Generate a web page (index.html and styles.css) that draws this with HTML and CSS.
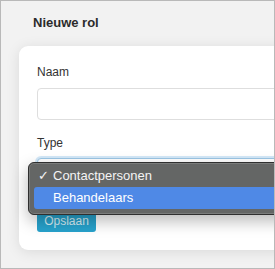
FILE: index.html
```html
<!DOCTYPE html>
<html lang="nl">
<head>
<meta charset="utf-8">
<title>Nieuwe rol</title>
<link rel="stylesheet" href="styles.css">
</head>
<body>
<div class="frame">
	<h1 class="title">Nieuwe rol</h1>
	<div class="card">
		<div class="field">
			<label class="lbl">Naam</label>
			<div class="input"></div>
		</div>
		<div class="field">
			<label class="lbl">Type</label>
			<div class="select-wrap">
				<div class="select"></div>
				<ul class="menu">
					<li class="opt"><span class="check">&#10003;</span>Contactpersonen</li>
					<li class="opt hl">Behandelaars</li>
				</ul>
			</div>
		</div>
		<button class="btn">Opslaan</button>
	</div>
</div>
</body>
</html>
```
FILE: styles.css
```css
html, body {margin:0; padding:0;}
body {font-family:"Liberation Sans", Arial, sans-serif; color:#333; background:#f2f2f2; overflow:hidden;}
.frame {box-sizing:border-box; width:275px; height:269px; border:1px solid #b9b9b9; background:#f2f2f2; overflow:hidden; padding:14px 0 0 0;}
.title {margin:0 0 15px 32px; font-size:13px; line-height:16px; font-weight:bold; color:#2b2b2b;}
.card {background:#fff; border-radius:9px; margin:0 -40px 0 18px; padding:18px 18px 18px 18px; box-shadow:0 2px 14px rgba(0,0,0,0.10);}
.field {margin-bottom:15px;}
.lbl {display:block; font-size:12px; line-height:16px; color:#333; margin-bottom:8px;}
.field + .field .lbl {margin-bottom:7px;}
.input {height:30px; border:1px solid #dedede; border-radius:4px; background:#fff;}
.select-wrap {position:relative; margin-bottom:20px;}
.select {height:30px; border:1px solid #9cc7e6; border-radius:4px; background:#fff; box-shadow:0 0 0 2px rgba(130,190,235,0.35);}
.menu {position:absolute; top:4px; left:-9px; width:270px; margin:0; padding:2px 5px 5px 5px; list-style:none; background:#646665; border:1px solid #2f2f2f; border-radius:6px; box-shadow:0 6px 16px rgba(0,0,0,0.28), inset 0 0 0 1px #7a7c7b;}
.opt {position:relative; height:22px; line-height:22px; padding-left:19px; font-size:13px; color:#f4f4f4; border-radius:3px;}
.opt.hl {background:#4f89e6; color:#fff;}
.check {position:absolute; left:4px; top:0; font-size:13px;}
.btn {display:block; height:22px; width:59px; padding:0; border:none; border-radius:3px; background:#27a2cc; color:#d6eef6; font-family:inherit; font-size:12px;}
```
